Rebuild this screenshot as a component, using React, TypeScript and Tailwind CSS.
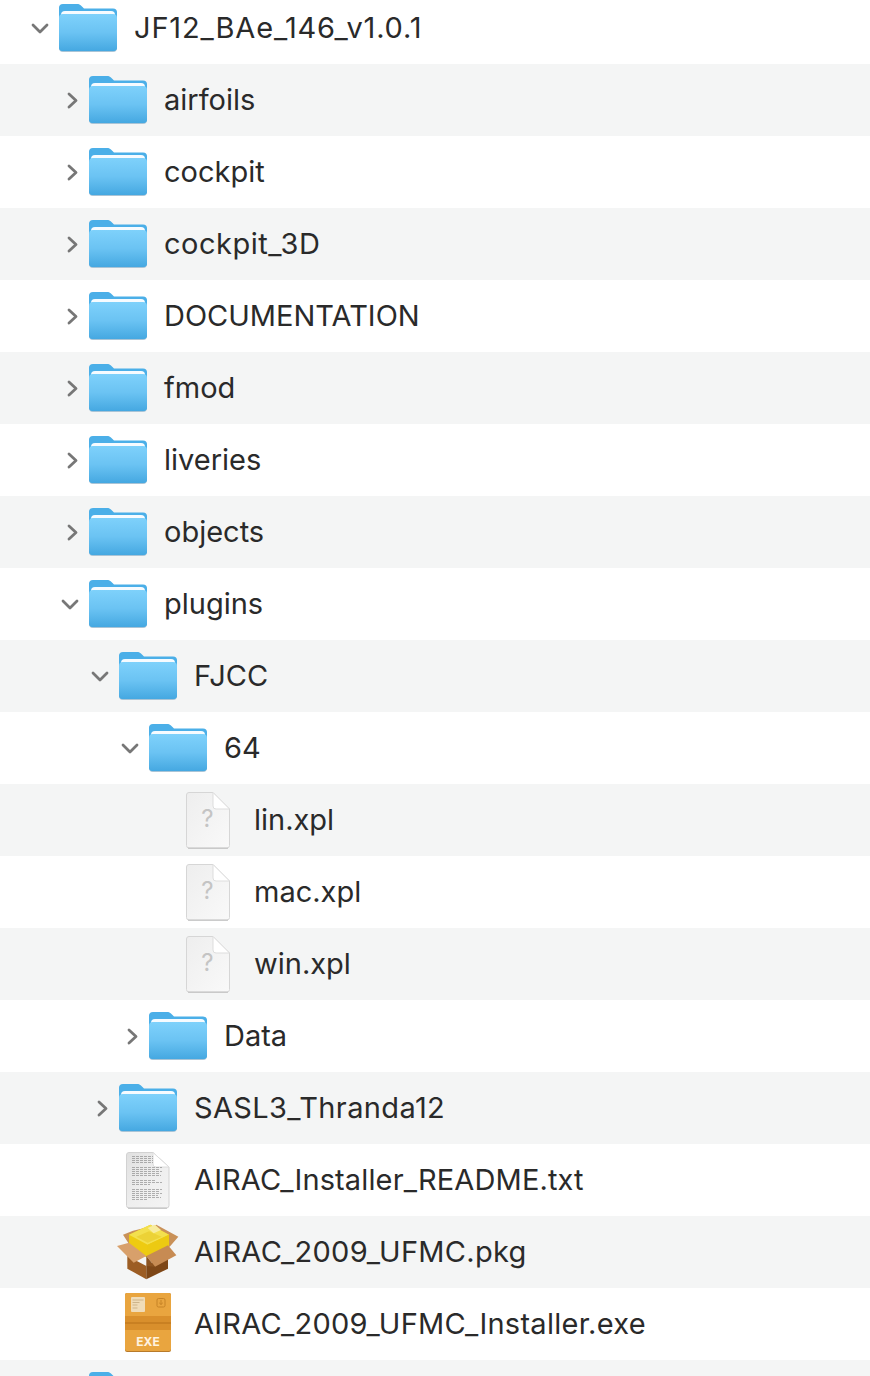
import React from "react";

type Kind = "folder" | "unknown" | "text" | "pkg" | "exe";
type Item = { name: string; depth: number; kind: Kind; open?: boolean; track?: string };

const items: Item[] = [
  { name: "JF12_BAe_146_v1.0.1", depth: 0, kind: "folder", open: true, track: "tracking-[0.84px]" },
  { name: "airfoils", depth: 1, kind: "folder" },
  { name: "cockpit", depth: 1, kind: "folder" },
  { name: "cockpit_3D", depth: 1, kind: "folder", track: "tracking-[0.5px]" },
  { name: "DOCUMENTATION", depth: 1, kind: "folder" },
  { name: "fmod", depth: 1, kind: "folder" },
  { name: "liveries", depth: 1, kind: "folder" },
  { name: "objects", depth: 1, kind: "folder" },
  { name: "plugins", depth: 1, kind: "folder", open: true },
  { name: "FJCC", depth: 2, kind: "folder", open: true },
  { name: "64", depth: 3, kind: "folder", open: true },
  { name: "lin.xpl", depth: 4, kind: "unknown" },
  { name: "mac.xpl", depth: 4, kind: "unknown" },
  { name: "win.xpl", depth: 4, kind: "unknown" },
  { name: "Data", depth: 3, kind: "folder" },
  { name: "SASL3_Thranda12", depth: 2, kind: "folder", track: "tracking-[0.36px]" },
  { name: "AIRAC_Installer_README.txt", depth: 2, kind: "text", track: "tracking-[0.13px]" },
  { name: "AIRAC_2009_UFMC.pkg", depth: 2, kind: "pkg", track: "tracking-[0.3px]" },
  { name: "AIRAC_2009_UFMC_Installer.exe", depth: 2, kind: "exe", track: "tracking-[0.28px]" },
  { name: "", depth: 1, kind: "folder" },
];

function Folder({ id }: { id: string }) {
  const back = "M1 44V5a4 4 0 0 1 4-4h14c2 0 3 .6 4.200 1.700L26 5.500h29a4 4 0 0 1 4 4V44a4 4 0 0 1-4 4H5a4 4 0 0 1-4-4Z";
  return (
    <svg width="60" height="50" viewBox="0 0 60 50" className="shrink-0">
      <defs>
        <linearGradient id={`f${id}`} x1="0" y1="0" x2="0" y2="1">
          <stop offset="0" stopColor="#7ed1fb" />
          <stop offset="0.5" stopColor="#6bc3f3" />
          <stop offset="1" stopColor="#45a8e1" />
        </linearGradient>
      </defs>
      <path d={back} fill="#a9c4d6" transform="translate(0 1)" />
      <path d={back} fill="#4bafe8" />
      <rect x="3" y="8" width="54" height="14" rx="4" fill="#f6fbff" />
      <path d="M1 44V15a4 4 0 0 1 4-4h50a4 4 0 0 1 4 4V44a4 4 0 0 1-4 4H5a4 4 0 0 1-4-4Z" fill={`url(#f${id})`} />
    </svg>
  );
}

function UnknownDoc() {
  return (
    <svg width="44" height="57" viewBox="0 0 44 57" className="shrink-0">
      <defs>
        <linearGradient id="ud" x1="0" y1="0" x2="1" y2="1">
          <stop offset="0" stopColor="#eeeeee" />
          <stop offset="1" stopColor="#f9f9f9" />
        </linearGradient>
      </defs>
      <path d="M3 .5h24L43.500 17v36.500a2.500 2.500 0 0 1-2.500 2.500H3A2.500 2.500 0 0 1 .5 53.500V3A2.500 2.500 0 0 1 3 .5Z" fill="url(#ud)" stroke="#d6d6d6" />
      <path d="M2 56.200h40" stroke="#bdbdbd" />
      <path d="M27 .5V14a3 3 0 0 0 3 3h13.500Z" fill="#ffffff" stroke="#dddddd" />
      <text x="21.500" y="35" fontSize="24" textAnchor="middle" fill="#c4c4c4" fontFamily="Inter, sans-serif">?</text>
    </svg>
  );
}

function TextDoc() {
  const lines = [
    [6, 4, 21], [6, 6, 21], [6, 8, 21], [6, 10, 21],
    [6, 15, 30], [6, 17, 28], [6, 19, 30], [6, 21, 27], [6, 23, 29],
    [6, 28, 24], [6, 30, 30], [6, 32, 18],
    [6, 37, 30], [6, 39, 28], [6, 41, 30], [6, 43, 26], [6, 45, 29], [6, 47, 15],
  ];
  return (
    <svg width="44" height="57" viewBox="0 0 44 57" className="shrink-0">
      <defs>
        <linearGradient id="td" x1="0" y1="0" x2="1" y2="1">
          <stop offset="0" stopColor="#e0e0e0" />
          <stop offset="0.5" stopColor="#eeeeee" />
          <stop offset="1" stopColor="#f4f4f4" />
        </linearGradient>
      </defs>
      <path d="M3 .5h24L43 15v38.500a2.500 2.500 0 0 1-2.500 2.500H3A2.500 2.500 0 0 1 .5 53.500V3A2.500 2.500 0 0 1 3 .5Z" fill="url(#td)" stroke="#d2d2d2" />
      <path d="M2 56.200h39" stroke="#bbbbbb" />
      <path d="M27 .5V12a3 3 0 0 0 3 3h13Z" fill="#ffffff" stroke="#dcdcdc" />
      {lines.map(([x, y, w], i) => (
        <path key={i} d={`M${x} ${y + 0.5}h${w}`} stroke="#555" strokeWidth="1.100" strokeDasharray="3 1" opacity=".42" />
      ))}
    </svg>
  );
}

function Pkg() {
  return (
    <svg width="70" height="64" viewBox="0 0 210 192" className="shrink-0">
      <polygon points="30,44 60,32 120,18 130,14 196,50 170,80 48,72" fill="#c99158" />
      <polygon points="48,44 112,14 168,44 168,80 100,112 48,84" fill="#eecb10" />
      <polygon points="48,44 112,14 168,44 104,74" fill="#f3e04e" />
      <polygon points="70,50 108,34 146,50 104,68" fill="#ecd236" />
      <polygon points="104,24 126,14 144,30 122,40" fill="#f8ec9e" />
      <polygon points="104,74 168,44 168,78 104,108" fill="#ecca12" />
      <polygon points="43,108 100,138 100,178 43,146" fill="#9c5d24" />
      <polygon points="100,138 165,104 165,146 100,178" fill="#7e4717" />
      <polygon points="12,78 48,68 100,108 62,128" fill="#d8a06b" />
      <polygon points="100,108 165,76 190,106 126,140" fill="#c78b53" />
      <polygon points="100,108 100,138 126,140" fill="#8c5320" />
    </svg>
  );
}

function Exe() {
  return (
    <svg width="46" height="59" viewBox="0 0 46 59" className="mb-[3px] shrink-0">
      <rect x="0" y="0" width="46" height="59" rx="2" fill="#b87a2a" />
      <rect x="0" y="0" width="46" height="58" rx="2" fill="#e9a53f" />
      <rect x="0" y="23" width="46" height="14" fill="#d98f2c" />
      <rect x="0" y="29" width="46" height="2" fill="#c98022" />
      <rect x="6" y="4" width="14" height="15" rx="1" fill="#f0dcb8" />
      <path d="M7.500 7h11M7.500 9.500h7M7.500 12h5M7.500 15h5" stroke="#cdb48a" strokeWidth="1" />
      <rect x="32" y="5.500" width="8" height="8.500" rx="1.500" fill="none" stroke="#c68327" />
      <path d="M36 7v4.500M34.200 9.800 36 11.500l1.800-1.700" fill="none" stroke="#c68327" />
      <text x="23" y="53" fontSize="12" fontWeight="700" textAnchor="middle" fill="#fff3e0" fontFamily="Inter, sans-serif">EXE</text>
    </svg>
  );
}

function Chevron({ open }: { open?: boolean }) {
  return open ? (
    <svg width="18" height="11" viewBox="0 0 18 11" className="ml-[1px] shrink-0">
      <path d="M2 2l7 7 7-7" fill="none" stroke="#777" strokeWidth="2.800" strokeLinecap="round" strokeLinejoin="round" />
    </svg>
  ) : (
    <svg width="11" height="17" viewBox="0 0 11 17" className="ml-[7px] shrink-0">
      <path d="M2 2l7 6.500-7 6.500" fill="none" stroke="#777" strokeWidth="2.800" strokeLinecap="round" strokeLinejoin="round" />
    </svg>
  );
}

function Icon({ kind, id }: { kind: Kind; id: string }) {
  if (kind === "folder") return <Folder id={id} />;
  if (kind === "unknown") return <UnknownDoc />;
  if (kind === "text") return <TextDoc />;
  if (kind === "pkg") return <Pkg />;
  return <Exe />;
}

export default function App() {
  return (
    <div className="h-[1376px] w-[870px] overflow-hidden bg-white font-['Inter',sans-serif] text-[29px] text-[#2a2a2a]">
      <div className="-mt-2">
        {items.map((it, i) => (
          <div
            key={i}
            className={`flex h-[72px] items-center ${i % 2 === 1 ? "bg-[#f4f5f5]" : "bg-white"}`}
            style={{ paddingLeft: 30 + it.depth * 30 }}
          >
            <div className="flex w-[28px] shrink-0 items-center">
              {it.kind === "folder" && <Chevron open={it.open} />}
            </div>
            <div className="flex w-[60px] shrink-0 justify-center">
              <Icon kind={it.kind} id={String(i)} />
            </div>
            <span className={`ml-[16px] whitespace-nowrap ${it.track ?? ""}`}>{it.name}</span>
          </div>
        ))}
      </div>
    </div>
  );
}
